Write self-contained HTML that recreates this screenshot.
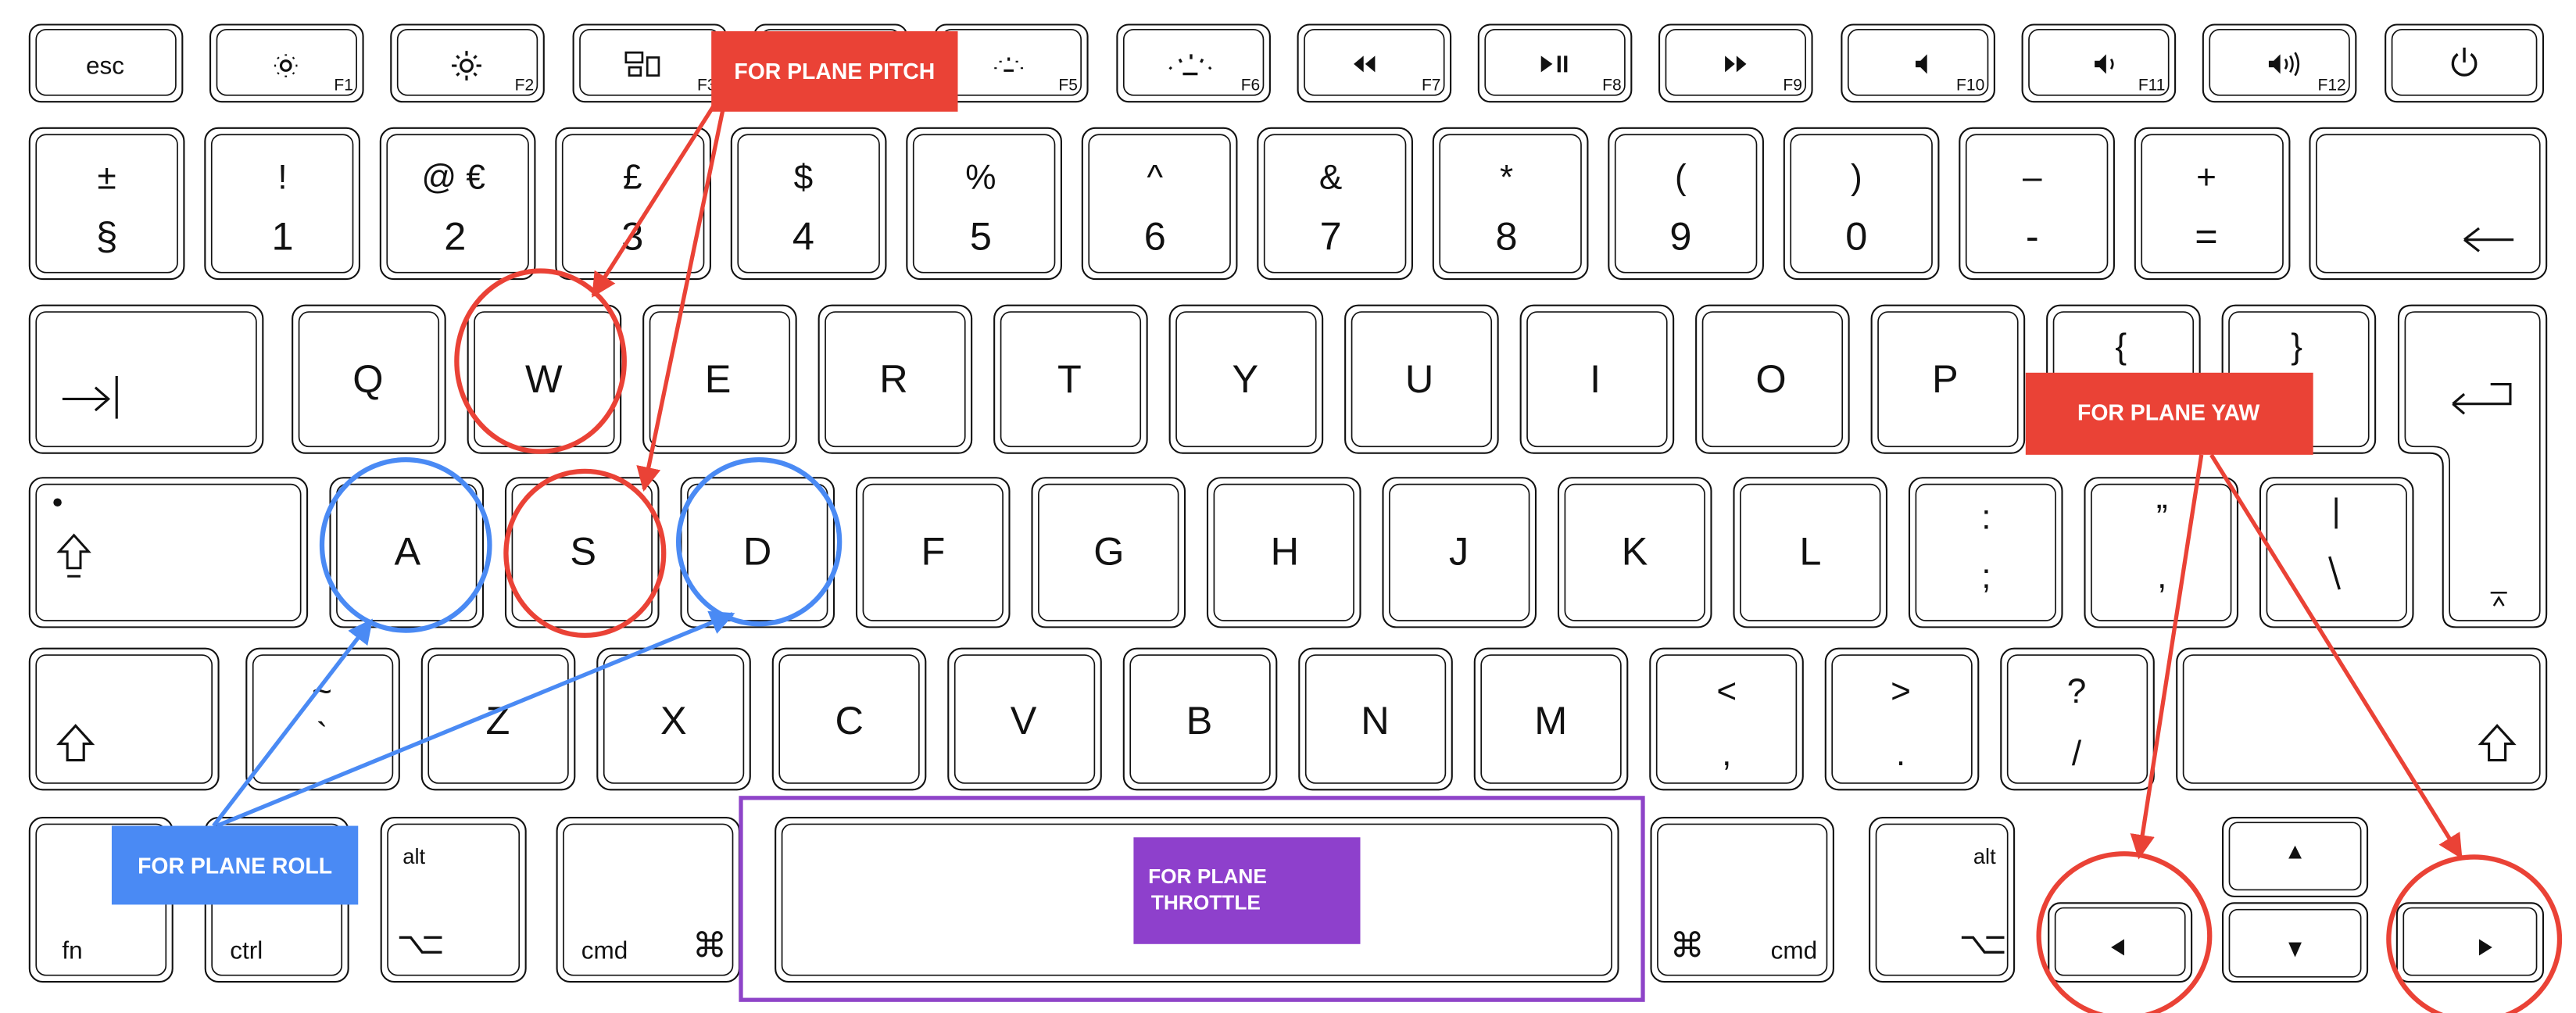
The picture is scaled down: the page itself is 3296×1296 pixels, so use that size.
<!DOCTYPE html>
<html><head><meta charset="utf-8">
<style>
html,body{margin:0;padding:0;background:#fff;width:3296px;height:1296px;overflow:hidden}
svg{display:block}
.o{fill:#fff;stroke:#111;stroke-width:1}
.i{fill:none;stroke:#111;stroke-width:.8}
text{font-family:"Liberation Sans",sans-serif;fill:#111;text-anchor:middle}
.L{font-size:24px}
.S{font-size:21px}
.F{font-size:10px;text-anchor:end}
.M{font-size:15px}
.W{fill:#fff;font-weight:bold;font-size:13.5px}
</style></head><body>
<svg width="3296" height="1296" viewBox="0 0 1568 617" preserveAspectRatio="none" xmlns="http://www.w3.org/2000/svg">
<defs>
<marker id="mr" viewBox="0 0 10 10" refX="9" refY="5" markerWidth="6" markerHeight="6" orient="auto"><path d="M0,0L10,5L0,10z" fill="#ea4236"/></marker>
<marker id="mb" viewBox="0 0 10 10" refX="9" refY="5" markerWidth="6" markerHeight="6" orient="auto"><path d="M0,0L10,5L0,10z" fill="#4a8af4"/></marker>
</defs>

<!-- Row 1 -->
<g>
<rect class="o" x="18" y="15" width="93" height="47" rx="7"/><rect class="i" x="22" y="18" width="85" height="40" rx="6"/>
<rect class="o" x="128" y="15" width="93" height="47" rx="7"/><rect class="i" x="132" y="18" width="85" height="40" rx="6"/>
<rect class="o" x="238" y="15" width="93" height="47" rx="7"/><rect class="i" x="242" y="18" width="85" height="40" rx="6"/>
<rect class="o" x="349" y="15" width="93" height="47" rx="7"/><rect class="i" x="353" y="18" width="85" height="40" rx="6"/>
<rect class="o" x="459" y="15" width="93" height="47" rx="7"/><rect class="i" x="463" y="18" width="85" height="40" rx="6"/>
<rect class="o" x="569" y="15" width="93" height="47" rx="7"/><rect class="i" x="573" y="18" width="85" height="40" rx="6"/>
<rect class="o" x="680" y="15" width="93" height="47" rx="7"/><rect class="i" x="684" y="18" width="85" height="40" rx="6"/>
<rect class="o" x="790" y="15" width="93" height="47" rx="7"/><rect class="i" x="794" y="18" width="85" height="40" rx="6"/>
<rect class="o" x="900" y="15" width="93" height="47" rx="7"/><rect class="i" x="904" y="18" width="85" height="40" rx="6"/>
<rect class="o" x="1010" y="15" width="93" height="47" rx="7"/><rect class="i" x="1014" y="18" width="85" height="40" rx="6"/>
<rect class="o" x="1121" y="15" width="93" height="47" rx="7"/><rect class="i" x="1125" y="18" width="85" height="40" rx="6"/>
<rect class="o" x="1231" y="15" width="93" height="47" rx="7"/><rect class="i" x="1235" y="18" width="85" height="40" rx="6"/>
<rect class="o" x="1341" y="15" width="93" height="47" rx="7"/><rect class="i" x="1345" y="18" width="85" height="40" rx="6"/>
<rect class="o" x="1452" y="15" width="96" height="47" rx="7"/><rect class="i" x="1456" y="18" width="88" height="40" rx="6"/>
<text class="M" x="64" y="45">esc</text>
<circle cx="174" cy="40" r="3" fill="none" stroke="#111" stroke-width="1.5"/>
<g stroke="#111" stroke-width="1.3"><path d="M174,33v1M174,46v1M167,40h1M180,40h1M169,35l.7.7M179,35l-.7.7M169,45l.7-.7M179,45l-.7-.7"/></g>
<circle cx="284" cy="40" r="3.5" fill="none" stroke="#111" stroke-width="1.5"/>
<g stroke="#111" stroke-width="1.5"><path d="M284,31v3M284,46v3M275,40h3M290,40h3M278,34l1.5,1.5M290,34l-1.5,1.5M278,46l1.5-1.5M290,46l-1.5-1.5"/></g>
<g fill="none" stroke="#111" stroke-width="1.3"><rect x="381" y="32" width="10" height="6"/><rect x="383" y="41" width="7" height="5"/><rect x="394" y="35" width="7" height="11"/></g>
<path d="M611,43h6M606,41v1M622,41v1M614,35v2M609,37v1M619,37v1" stroke="#111" stroke-width="1.5"/>
<path d="M720,45h9M712,41l1,1M737,41l-1,1M725,33v3M718,36l1,2M732,36l-1,2" stroke="#111" stroke-width="1.6"/>
<path d="M830,34l-6,5l6,5zM837,34l-6,5l6,5z" fill="#111"/>
<path d="M938,34l7,5l-7,5z" fill="#111"/><path d="M949,34v10M953,34v10" stroke="#111" stroke-width="2"/>
<path d="M1050,34l6,5l-6,5zM1057,34l6,5l-6,5z" fill="#111"/>
<path d="M1166,37h3l4,-4v12l-4,-4h-3z" fill="#111"/>
<path d="M1275,37h3l4,-4v12l-4,-4h-3z" fill="#111"/><path d="M1285,36q2,3 0,6" fill="none" stroke="#111" stroke-width="1.3"/>
<path d="M1381,37h3l4,-4v12l-4,-4h-3z" fill="#111"/><path d="M1391,36q2,3 0,6M1394,34q3,5 0,10M1397,32q4,7 0,14" fill="none" stroke="#111" stroke-width="1.3"/>
<path d="M1496,33a7,7 0 1,0 8,0M1500,29v9" fill="none" stroke="#111" stroke-width="1.6"/>
<text class="F" x="215" y="55">F1</text><text class="F" x="325" y="55">F2</text><text class="F" x="436" y="55">F3</text>
<text class="F" x="656" y="55">F5</text><text class="F" x="767" y="55">F6</text><text class="F" x="877" y="55">F7</text>
<text class="F" x="987" y="55">F8</text><text class="F" x="1097" y="55">F9</text><text class="F" x="1208" y="55">F10</text>
<text class="F" x="1318" y="55">F11</text><text class="F" x="1428" y="55">F12</text>
</g>

<!-- Row 2 -->
<g>
<rect class="o" x="18" y="78" width="94" height="92" rx="8"/><rect class="i" x="22" y="82" width="86" height="84" rx="6"/>
<rect class="o" x="124.8" y="78" width="94" height="92" rx="8"/><rect class="i" x="128.8" y="82" width="86" height="84" rx="6"/>
<rect class="o" x="231.6" y="78" width="94" height="92" rx="8"/><rect class="i" x="235.6" y="82" width="86" height="84" rx="6"/>
<rect class="o" x="338.4" y="78" width="94" height="92" rx="8"/><rect class="i" x="342.4" y="82" width="86" height="84" rx="6"/>
<rect class="o" x="445.2" y="78" width="94" height="92" rx="8"/><rect class="i" x="449.2" y="82" width="86" height="84" rx="6"/>
<rect class="o" x="552" y="78" width="94" height="92" rx="8"/><rect class="i" x="556" y="82" width="86" height="84" rx="6"/>
<rect class="o" x="658.8" y="78" width="94" height="92" rx="8"/><rect class="i" x="662.8" y="82" width="86" height="84" rx="6"/>
<rect class="o" x="765.6" y="78" width="94" height="92" rx="8"/><rect class="i" x="769.6" y="82" width="86" height="84" rx="6"/>
<rect class="o" x="872.4" y="78" width="94" height="92" rx="8"/><rect class="i" x="876.4" y="82" width="86" height="84" rx="6"/>
<rect class="o" x="979.2" y="78" width="94" height="92" rx="8"/><rect class="i" x="983.2" y="82" width="86" height="84" rx="6"/>
<rect class="o" x="1086" y="78" width="94" height="92" rx="8"/><rect class="i" x="1090" y="82" width="86" height="84" rx="6"/>
<rect class="o" x="1192.8" y="78" width="94" height="92" rx="8"/><rect class="i" x="1196.8" y="82" width="86" height="84" rx="6"/>
<rect class="o" x="1299.6" y="78" width="94" height="92" rx="8"/><rect class="i" x="1303.6" y="82" width="86" height="84" rx="6"/>
<rect class="o" x="1406" y="78" width="144" height="92" rx="8"/><rect class="i" x="1410" y="82" width="136" height="84" rx="6"/>
<g class="S">
<text class="S" x="65" y="115">±</text><text class="S" x="172" y="115">!</text><text class="S" x="276" y="115">@ €</text>
<text class="S" x="385" y="115">£</text><text class="S" x="489" y="115">$</text><text class="S" x="597" y="115">%</text>
<text class="S" x="703" y="115">^</text><text class="S" x="810" y="115">&amp;</text><text class="S" x="917" y="115">*</text>
<text class="S" x="1023" y="115">(</text><text class="S" x="1130" y="115">)</text><text class="S" x="1237" y="115">–</text>
<text class="S" x="1343" y="115">+</text>
</g>
<text class="L" x="65" y="152">§</text><text class="L" x="172" y="152">1</text><text class="L" x="277" y="152">2</text>
<text class="L" x="385" y="152">3</text><text class="L" x="489" y="152">4</text><text class="L" x="597" y="152">5</text>
<text class="L" x="703" y="152">6</text><text class="L" x="810" y="152">7</text><text class="L" x="917" y="152">8</text>
<text class="L" x="1023" y="152">9</text><text class="L" x="1130" y="152">0</text><text class="L" x="1237" y="152">-</text>
<text class="L" x="1343" y="152">=</text>
<path d="M1500,146h30M1500,146l9,-7M1500,146l9,7" fill="none" stroke="#111" stroke-width="1.5"/>
</g>

<!-- Row 3 -->
<g>
<rect class="o" x="18" y="186" width="142" height="90" rx="8"/><rect class="i" x="22" y="190" width="134" height="82" rx="6"/>
<rect class="o" x="178" y="186" width="93" height="90" rx="8"/><rect class="i" x="182" y="190" width="85" height="82" rx="6"/>
<rect class="o" x="284.8" y="186" width="93" height="90" rx="8"/><rect class="i" x="288.8" y="190" width="85" height="82" rx="6"/>
<rect class="o" x="391.6" y="186" width="93" height="90" rx="8"/><rect class="i" x="395.6" y="190" width="85" height="82" rx="6"/>
<rect class="o" x="498.4" y="186" width="93" height="90" rx="8"/><rect class="i" x="502.4" y="190" width="85" height="82" rx="6"/>
<rect class="o" x="605.2" y="186" width="93" height="90" rx="8"/><rect class="i" x="609.2" y="190" width="85" height="82" rx="6"/>
<rect class="o" x="712" y="186" width="93" height="90" rx="8"/><rect class="i" x="716" y="190" width="85" height="82" rx="6"/>
<rect class="o" x="818.8" y="186" width="93" height="90" rx="8"/><rect class="i" x="822.8" y="190" width="85" height="82" rx="6"/>
<rect class="o" x="925.6" y="186" width="93" height="90" rx="8"/><rect class="i" x="929.6" y="190" width="85" height="82" rx="6"/>
<rect class="o" x="1032.4" y="186" width="93" height="90" rx="8"/><rect class="i" x="1036.4" y="190" width="85" height="82" rx="6"/>
<rect class="o" x="1139.2" y="186" width="93" height="90" rx="8"/><rect class="i" x="1143.2" y="190" width="85" height="82" rx="6"/>
<rect class="o" x="1246" y="186" width="93" height="90" rx="8"/><rect class="i" x="1250" y="190" width="85" height="82" rx="6"/>
<rect class="o" x="1352.8" y="186" width="93" height="90" rx="8"/><rect class="i" x="1356.8" y="190" width="85" height="82" rx="6"/>
<path class="o" d="M1468,186H1542Q1550,186 1550,194V374Q1550,382 1542,382H1495Q1487,382 1487,374V284Q1487,276 1479,276H1468Q1460,276 1460,268V194Q1460,186 1468,186Z"/>
<path class="i" d="M1470,190H1540Q1546,190 1546,196V372Q1546,378 1540,378H1497Q1491,378 1491,372V282Q1491,272 1481,272H1470Q1464,272 1464,266V196Q1464,190 1470,190Z"/>
<path d="M38,243h28M58,236l8,7l-8,7M71,229v26" fill="none" stroke="#111" stroke-width="1.5"/>
<text class="L" x="224" y="239">Q</text><text class="L" x="331" y="239">W</text><text class="L" x="437" y="239">E</text>
<text class="L" x="544" y="239">R</text><text class="L" x="651" y="239">T</text><text class="L" x="758" y="239">Y</text>
<text class="L" x="864" y="239">U</text><text class="L" x="971" y="239">I</text><text class="L" x="1078" y="239">O</text>
<text class="L" x="1184" y="239">P</text>
<text class="S" x="1291" y="218">{</text><text class="S" x="1398" y="218">}</text>
<path d="M1493,246h35v-12h-12M1493,246l7,-6M1493,246l7,6" fill="none" stroke="#111" stroke-width="1.5"/>
</g>

<!-- Row 4 -->
<g>
<rect class="o" x="18" y="291" width="169" height="91" rx="8"/><rect class="i" x="22" y="295" width="161" height="83" rx="6"/>
<rect class="o" x="201" y="291" width="93" height="91" rx="8"/><rect class="i" x="205" y="295" width="85" height="83" rx="6"/>
<rect class="o" x="307.8" y="291" width="93" height="91" rx="8"/><rect class="i" x="311.8" y="295" width="85" height="83" rx="6"/>
<rect class="o" x="414.6" y="291" width="93" height="91" rx="8"/><rect class="i" x="418.6" y="295" width="85" height="83" rx="6"/>
<rect class="o" x="521.4" y="291" width="93" height="91" rx="8"/><rect class="i" x="525.4" y="295" width="85" height="83" rx="6"/>
<rect class="o" x="628.2" y="291" width="93" height="91" rx="8"/><rect class="i" x="632.2" y="295" width="85" height="83" rx="6"/>
<rect class="o" x="735" y="291" width="93" height="91" rx="8"/><rect class="i" x="739" y="295" width="85" height="83" rx="6"/>
<rect class="o" x="841.8" y="291" width="93" height="91" rx="8"/><rect class="i" x="845.8" y="295" width="85" height="83" rx="6"/>
<rect class="o" x="948.6" y="291" width="93" height="91" rx="8"/><rect class="i" x="952.6" y="295" width="85" height="83" rx="6"/>
<rect class="o" x="1055.4" y="291" width="93" height="91" rx="8"/><rect class="i" x="1059.4" y="295" width="85" height="83" rx="6"/>
<rect class="o" x="1162.2" y="291" width="93" height="91" rx="8"/><rect class="i" x="1166.2" y="295" width="85" height="83" rx="6"/>
<rect class="o" x="1269" y="291" width="93" height="91" rx="8"/><rect class="i" x="1273" y="295" width="85" height="83" rx="6"/>
<rect class="o" x="1375.8" y="291" width="93" height="91" rx="8"/><rect class="i" x="1379.8" y="295" width="85" height="83" rx="6"/>
<circle cx="35" cy="306" r="2.5" fill="#111"/>
<path d="M45,326l-9,10h5v10h8v-10h5z" fill="none" stroke="#111" stroke-width="1.4"/><path d="M41,351h8" stroke="#111" stroke-width="1.4"/>
<text class="L" x="248" y="344">A</text><text class="L" x="355" y="344">S</text><text class="L" x="461" y="344">D</text>
<text class="L" x="568" y="344">F</text><text class="L" x="675" y="344">G</text><text class="L" x="782" y="344">H</text>
<text class="L" x="888" y="344">J</text><text class="L" x="995" y="344">K</text><text class="L" x="1102" y="344">L</text>
<text class="S" x="1209" y="322">:</text><text class="S" x="1209" y="358">;</text>
<text class="S" x="1316" y="322">”</text><text class="S" x="1316" y="358">,</text>
<path d="M1422,303v19M1418,339l6,20" stroke="#111" stroke-width="1.6"/>
<path d="M1516,361h10M1518,369l3,-5l3,5" fill="none" stroke="#111" stroke-width="1.2"/>
</g>

<!-- Row 5 -->
<g>
<rect class="o" x="18" y="395" width="115" height="86" rx="8"/><rect class="i" x="22" y="399" width="107" height="78" rx="6"/>
<rect class="o" x="150" y="395" width="93" height="86" rx="8"/><rect class="i" x="154" y="399" width="85" height="78" rx="6"/>
<rect class="o" x="256.8" y="395" width="93" height="86" rx="8"/><rect class="i" x="260.8" y="399" width="85" height="78" rx="6"/>
<rect class="o" x="363.6" y="395" width="93" height="86" rx="8"/><rect class="i" x="367.6" y="399" width="85" height="78" rx="6"/>
<rect class="o" x="470.4" y="395" width="93" height="86" rx="8"/><rect class="i" x="474.4" y="399" width="85" height="78" rx="6"/>
<rect class="o" x="577.2" y="395" width="93" height="86" rx="8"/><rect class="i" x="581.2" y="399" width="85" height="78" rx="6"/>
<rect class="o" x="684" y="395" width="93" height="86" rx="8"/><rect class="i" x="688" y="399" width="85" height="78" rx="6"/>
<rect class="o" x="790.8" y="395" width="93" height="86" rx="8"/><rect class="i" x="794.8" y="399" width="85" height="78" rx="6"/>
<rect class="o" x="897.6" y="395" width="93" height="86" rx="8"/><rect class="i" x="901.6" y="399" width="85" height="78" rx="6"/>
<rect class="o" x="1004.4" y="395" width="93" height="86" rx="8"/><rect class="i" x="1008.4" y="399" width="85" height="78" rx="6"/>
<rect class="o" x="1111.2" y="395" width="93" height="86" rx="8"/><rect class="i" x="1115.2" y="399" width="85" height="78" rx="6"/>
<rect class="o" x="1218" y="395" width="93" height="86" rx="8"/><rect class="i" x="1222" y="399" width="85" height="78" rx="6"/>
<rect class="o" x="1325" y="395" width="225" height="86" rx="8"/><rect class="i" x="1329" y="399" width="217" height="78" rx="6"/>
<path d="M46,442l-10,11h5v10h10v-10h5z" fill="none" stroke="#111" stroke-width="1.5"/>
<path d="M1520,442l-10,11h5v10h10v-10h5z" fill="none" stroke="#111" stroke-width="1.5"/>
<text class="S" x="196" y="428">~</text><text class="S" x="196" y="455">`</text>
<text class="L" x="303" y="447">Z</text><text class="L" x="410" y="447">X</text><text class="L" x="517" y="447">C</text>
<text class="L" x="623" y="447">V</text><text class="L" x="730" y="447">B</text><text class="L" x="837" y="447">N</text>
<text class="L" x="944" y="447">M</text>
<text class="S" x="1051" y="428">&lt;</text><text class="S" x="1051" y="466">,</text>
<text class="S" x="1157" y="428">&gt;</text><text class="S" x="1157" y="466">.</text>
<text class="S" x="1264" y="428">?</text><text class="S" x="1264" y="466">/</text>
</g>

<!-- Row 6 -->
<g>
<rect class="o" x="18" y="498" width="87" height="100" rx="8"/><rect class="i" x="22" y="502" width="79" height="92" rx="6"/>
<rect class="o" x="125" y="498" width="87" height="100" rx="8"/><rect class="i" x="129" y="502" width="79" height="92" rx="6"/>
<rect class="o" x="232" y="498" width="88" height="100" rx="8"/><rect class="i" x="236" y="502" width="80" height="92" rx="6"/>
<rect class="o" x="339" y="498" width="111" height="100" rx="8"/><rect class="i" x="343" y="502" width="103" height="92" rx="6"/>
<rect class="o" x="472" y="498" width="513" height="100" rx="8"/><rect class="i" x="476" y="502" width="505" height="92" rx="6"/>
<rect class="o" x="1005" y="498" width="111" height="100" rx="8"/><rect class="i" x="1009" y="502" width="103" height="92" rx="6"/>
<rect class="o" x="1138" y="498" width="88" height="100" rx="8"/><rect class="i" x="1142" y="502" width="80" height="92" rx="6"/>
<rect class="o" x="1247" y="550" width="87" height="48" rx="7"/><rect class="i" x="1251" y="553" width="79" height="41" rx="5"/>
<rect class="o" x="1353" y="498" width="88" height="48" rx="7"/><rect class="i" x="1357" y="501" width="80" height="41" rx="5"/>
<rect class="o" x="1353" y="550" width="88" height="48" rx="7"/><rect class="i" x="1357" y="554" width="80" height="41" rx="5"/>
<rect class="o" x="1459" y="550" width="89" height="48" rx="7"/><rect class="i" x="1463" y="553" width="81" height="41" rx="5"/>
<text class="M" x="44" y="584">fn</text><text class="M" x="150" y="584">ctrl</text><text class="M" x="252" y="526" style="font-size:13px">alt</text>
<text class="M" x="368" y="584">cmd</text><text class="M" x="1092" y="584">cmd</text><text class="M" x="1208" y="526" style="font-size:13px">alt</text>
<path d="M243,571h7l7,9h12M258,571h11" fill="none" stroke="#111" stroke-width="1.6"/>
<path d="M1194,571h7l7,9h12M1209,571h11" fill="none" stroke="#111" stroke-width="1.6"/>
<text class="S" x="432" y="583">⌘</text><text class="S" x="1027" y="583">⌘</text>
<path d="M1285,577l8,-5v10z" fill="#111"/>
<path d="M1397,515l-4,8h8z" fill="#111"/>
<path d="M1393,574h8l-4,9z" fill="#111"/>
<path d="M1509,572l8,5l-8,5z" fill="#111"/>
</g>

<!-- Annotations -->
<g fill="none" stroke-width="3">
<line x1="436" y1="62" x2="361" y2="180" stroke="#ea4236" stroke-width="2.5" marker-end="url(#mr)"/>
<line x1="441" y1="62" x2="392" y2="298" stroke="#ea4236" stroke-width="2.5" marker-end="url(#mr)"/>
<ellipse cx="329" cy="220" rx="51" ry="55" stroke="#ea4236"/>
<ellipse cx="356" cy="337" rx="48" ry="50" stroke="#ea4236"/>
<ellipse cx="247" cy="332" rx="51" ry="52" stroke="#4a8af4"/>
<ellipse cx="462" cy="330" rx="49" ry="50" stroke="#4a8af4"/>
<line x1="130" y1="503" x2="226" y2="378" stroke="#4a8af4" stroke-width="2.5" marker-end="url(#mb)"/>
<line x1="132" y1="503" x2="446" y2="374" stroke="#4a8af4" stroke-width="2.5" marker-end="url(#mb)"/>
<rect x="451" y="486" width="549" height="123" stroke="#8e44c8" stroke-width="2.5"/>
<line x1="1340" y1="277" x2="1302" y2="522" stroke="#ea4236" stroke-width="2.5" marker-end="url(#mr)"/>
<line x1="1346" y1="277" x2="1498" y2="522" stroke="#ea4236" stroke-width="2.5" marker-end="url(#mr)"/>
<ellipse cx="1293" cy="570" rx="52" ry="50" stroke="#ea4236"/>
<ellipse cx="1506" cy="572" rx="52" ry="50" stroke="#ea4236"/>
</g>
<rect x="433" y="19" width="150" height="49" fill="#ea4236"/>
<text class="W" x="508" y="48">FOR PLANE PITCH</text>
<rect x="68" y="503" width="150" height="48" fill="#4a8af4"/>
<text class="W" x="143" y="532">FOR PLANE ROLL</text>
<rect x="690" y="510" width="138" height="65" fill="#8e40cc"/>
<text class="W" x="735" y="538" style="font-size:12.5px">FOR PLANE</text>
<text class="W" x="734" y="554" style="font-size:12.5px">THROTTLE</text>
<rect x="1233" y="227" width="175" height="50" fill="#ea4236"/>
<text class="W" x="1320" y="256">FOR PLANE YAW</text>
</svg>
</body></html>
